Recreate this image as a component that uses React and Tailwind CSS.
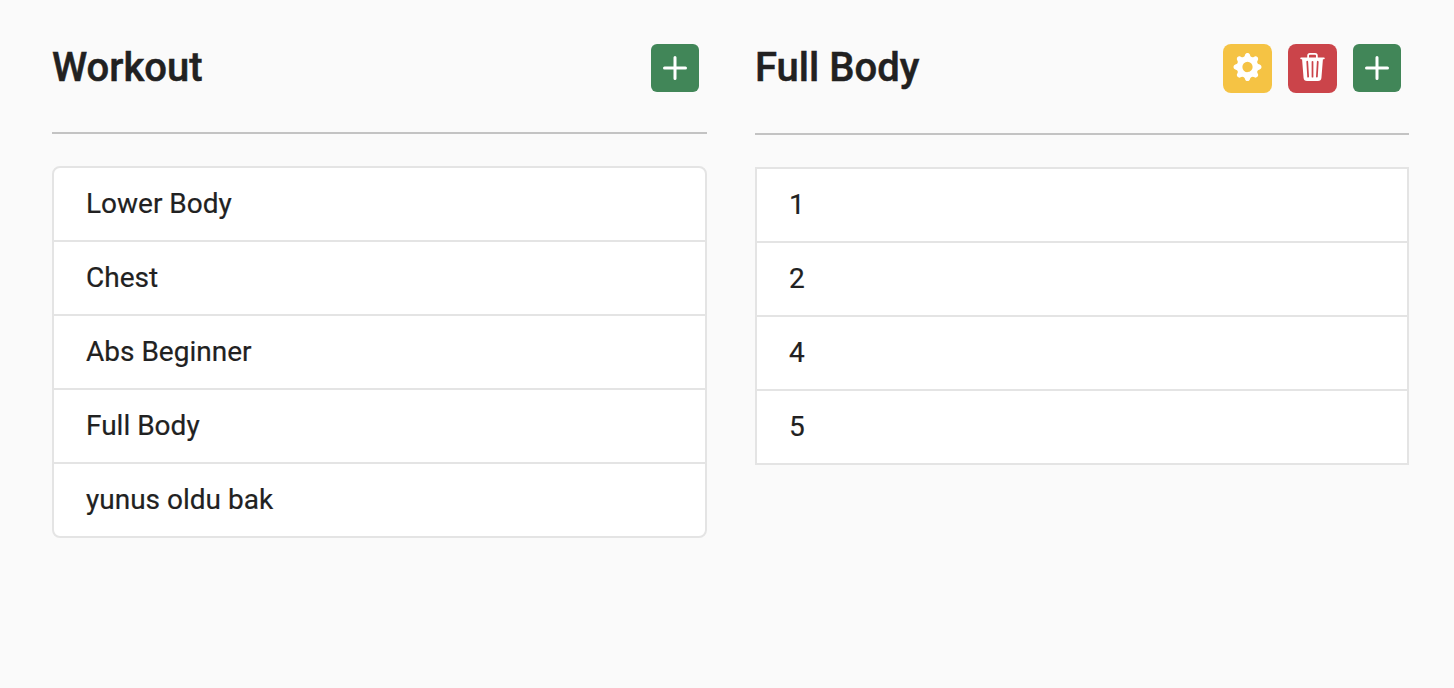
import { BsGearFill, BsPlus, BsTrash3Fill } from "react-icons/bs";

const workouts = ["Lower Body", "Chest", "Abs Beginner", "Full Body", "yunus oldu bak"];
const days = ["1", "2", "4", "5"];

function AddButton() {
  return (
    <button aria-label="Add" className="h-12 w-12 rounded-md bg-[#418658] text-white">
      <BsPlus className="h-12 w-12" />
    </button>
  );
}

function Panel({ title, actions, headerClass, items, listClass }) {
  return (
    <section className="min-w-0">
      <header className={"flex items-start justify-between border-b-2 border-[#c3c3c3] pr-2 " + headerClass}>
        <h1 className="text-[40px] leading-12 font-medium [-webkit-text-stroke:0.5px_#212121]">{title}</h1>
        <div className="flex items-start gap-4">{actions}</div>
      </header>
      <ul className={"mt-8 divide-y-2 divide-[#e4e4e4] border-2 border-[#e4e4e4] bg-white " + listClass}>
        {items.map((item) => (
          <li
            key={item}
            className="h-[74px] px-8 pt-[15px] text-[28px] leading-[42px] [-webkit-text-stroke:0.2px_#212121] last:h-[72px]"
          >
            {item}
          </li>
        ))}
      </ul>
    </section>
  );
}

export default function App() {
  return (
    <main className="grid min-h-screen grid-cols-[655px_654px] content-start gap-x-12 bg-[#fafafa] pt-11 pl-[52px] font-['Roboto',sans-serif] text-[#212121]">
      <Panel
        title="Workout"
        headerClass="h-[90px]"
        listClass="rounded-lg"
        items={workouts}
        actions={<AddButton />}
      />
      <Panel
        title="Full Body"
        headerClass="h-[91px]"
        listClass=""
        items={days}
        actions={
          <>
            <button aria-label="Settings" className="flex h-[49px] w-[49px] rounded-lg bg-[#f5c344] pt-[9px] text-white">
              <BsGearFill className="h-7 w-[49px]" />
            </button>
            <button aria-label="Delete" className="flex h-[49px] w-[49px] rounded-lg bg-[#cb444a] pt-[9px] text-white">
              <BsTrash3Fill className="h-7 w-[49px]" />
            </button>
            <AddButton />
          </>
        }
      />
    </main>
  );
}
